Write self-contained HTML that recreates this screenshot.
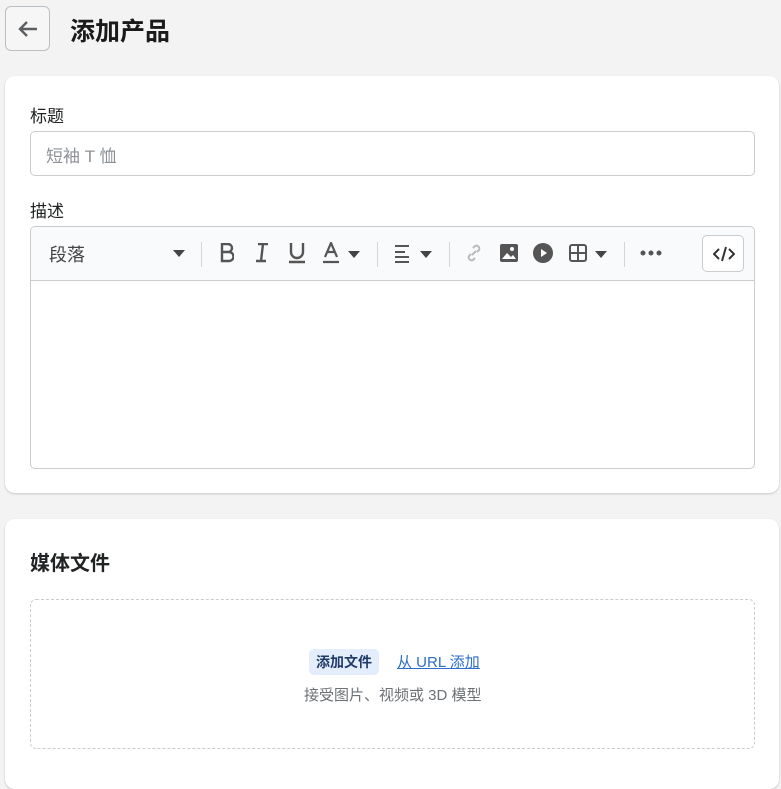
<!DOCTYPE html>
<html><head><meta charset="utf-8"><style>
*{box-sizing:border-box;margin:0;padding:0}
body{width:781px;height:774px;overflow:hidden;background:#f3f3f3;font-family:"Liberation Sans","Noto Sans CJK SC",sans-serif;color:#202223;position:relative}
.back{position:absolute;left:5px;top:6px;width:45px;height:45px;border:1px solid #babfc3;border-radius:6px;background:#f6f6f7}
.h1{position:absolute;left:70px;top:12px;font-size:25px;font-weight:700;color:#1a1a1a}
.card{position:absolute;left:5px;width:774px;background:#fff;border-radius:10px;box-shadow:0 1px 2px rgba(0,0,0,.18)}
.lbl{position:absolute;left:25px;font-size:17px;color:#202223}
.inp{position:absolute;left:25px;width:725px;height:45px;border:1px solid #c9cccf;border-radius:5px;font-size:17px;color:#8c9196;padding:10px 15px}
.ed{position:absolute;left:25px;top:150px;width:725px;height:243px;border:1px solid #c9cccf;border-radius:5px}
.tb{height:54px;background:#f9fafb;border-bottom:1px solid #c9cccf;border-radius:5px 5px 0 0;position:relative}
.tb svg{position:absolute}
.sep{position:absolute;top:15px;width:1px;height:25px;background:#d2d5d8}
.drop{position:absolute;left:25px;top:80px;width:725px;height:150px;border:1px dashed #c9cccf;border-radius:6px}
</style></head><body>
<div class="back"><svg width="45" height="45" viewBox="0 0 45 45"><path d="M31 22H14M21 15l-7 7 7 7" stroke="#5c5f62" stroke-width="2.4" fill="none"/></svg></div>
<div class="h1">添加产品</div>
<div class="card" style="top:76px;height:417px">
<div class="lbl" style="top:26px">标题</div>
<div class="inp" style="top:55px">短袖 T 恤</div>
<div class="lbl" style="top:121px">描述</div>
<div class="ed"><div class="tb">
<span style="position:absolute;left:18px;top:14px;font-size:18px;color:#444">段落</span>
<svg style="left:142px;top:23px" width="12" height="8"><path d="M0 0h12L6 7z" fill="#444"/></svg>
<div class="sep" style="left:170px"></div>
<svg style="left:189px;top:16px" width="14" height="20"><path d="M2 1h6a4 4 0 010 8H2zM2 9h7a4.5 4.5 0 010 9H2z" stroke="#555" stroke-width="2.4" fill="none"/></svg>
<svg style="left:224px;top:16px" width="14" height="20"><path d="M3 1h10M1 18h10M8 1L6 18" stroke="#555" stroke-width="2.4" fill="none"/></svg>
<svg style="left:257px;top:15px" width="18" height="22"><path d="M3 1v9a6 6 0 0012 0V1M1 20h16" stroke="#555" stroke-width="2.4" fill="none"/></svg>
<svg style="left:291px;top:15px" width="18" height="22"><path d="M3 15L9 1l6 14M5 10h8M1 20h16" stroke="#555" stroke-width="2.2" fill="none"/></svg>
<svg style="left:317px;top:24px" width="12" height="8"><path d="M0 0h12L6 7z" fill="#444"/></svg>
<div class="sep" style="left:346px"></div>
<svg style="left:363px;top:17px" width="18" height="20"><path d="M1 2h14M1 8h10M1 13h14M1 18h14" stroke="#555" stroke-width="2"/></svg>
<svg style="left:389px;top:24px" width="12" height="8"><path d="M0 0h12L6 7z" fill="#444"/></svg>
<div class="sep" style="left:418px"></div>
<svg style="left:433px;top:16px" width="20" height="20" viewBox="0 0 20 20"><path d="M8 12l4-4M9 5l2-2a3 3 0 014 4l-2 2M11 15l-2 2a3 3 0 01-4-4l2-2" stroke="#bbb" stroke-width="2" fill="none"/></svg>
<svg style="left:469px;top:17px" width="18" height="18"><rect width="18" height="18" rx="2" fill="#555"/><path d="M2 15l5-6 4 4 2-2 3 4z" fill="#fff"/><circle cx="12" cy="5" r="2" fill="#fff"/></svg>
<svg style="left:502px;top:16px" width="20" height="20"><circle cx="10" cy="10" r="10" fill="#555"/><path d="M8 6l6 4-6 4z" fill="#fff"/></svg>
<svg style="left:538px;top:17px" width="18" height="18"><rect x="1" y="1" width="16" height="16" rx="2" stroke="#555" stroke-width="2" fill="none"/><path d="M9 1v16M1 9h16" stroke="#555" stroke-width="2"/></svg>
<svg style="left:564px;top:24px" width="12" height="8"><path d="M0 0h12L6 7z" fill="#444"/></svg>
<div class="sep" style="left:593px"></div>
<svg style="left:609px;top:23px" width="22" height="6"><circle cx="3" cy="3" r="2.5" fill="#555"/><circle cx="11" cy="3" r="2.5" fill="#555"/><circle cx="19" cy="3" r="2.5" fill="#555"/></svg>
<div style="position:absolute;left:671px;top:8px;width:42px;height:37px;border:1px solid #c9cccf;border-radius:5px;background:#fff"><svg style="left:10px;top:9px" width="22" height="18"><path d="M6 4L1 9l5 5M16 4l5 5-5 5M13 2L9 16" stroke="#333" stroke-width="2" fill="none"/></svg></div>
</div></div>
</div>
<div class="card" style="top:519px;height:270px">
<div style="position:absolute;left:25px;top:28px;font-size:20px;font-weight:700">媒体文件</div>
<div class="drop">
<span style="position:absolute;left:278px;top:49px;background:#e3edfb;border-radius:5px;padding:3px 7px;font-size:14px;font-weight:700;color:#1f3a67">添加文件</span>
<span style="position:absolute;left:366px;top:51px;font-size:15px;color:#2c6ecb;text-decoration:underline">从 URL 添加</span>
<span style="position:absolute;left:273px;top:84px;font-size:15px;color:#6d7175">接受图片、视频或 3D 模型</span>
</div>
</div>
</body></html>
